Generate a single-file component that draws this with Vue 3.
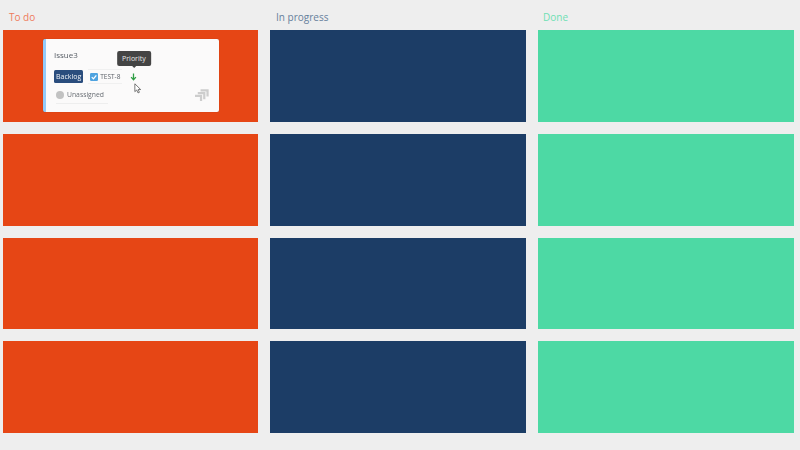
<template>
  <div class="board">
    <div v-for="col in columns" :key="col.name" class="column" :class="col.cls">
      <div class="title">{{ col.name }}</div>
      <div class="cells">
        <div v-for="n in 4" :key="n" class="cell">
          <div v-if="col.cls === 'todo' && n === 1" class="card">
            <div class="summary">Issue3</div>
            <div class="meta">
              <span class="status">Backlog</span>
              <span class="key">
                <svg class="check" viewBox="0 0 10 10" width="8" height="8">
                  <rect width="10" height="10" rx="1.5" fill="#4fa3e0" />
                  <path d="M2.2 5.2 4.3 7.3 7.9 2.9" fill="none" stroke="#fff" stroke-width="1.6" />
                </svg>
                TEST-8
              </span>
              <span class="priority">
                <svg viewBox="0 0 8 10" width="7" height="8">
                  <path d="M4 0.5V8.5M1 5.2 4 8.5 7 5.2" fill="none" stroke="#2f9e44" stroke-width="1.6" />
                </svg>
                <span class="tooltip">Priority</span>
                <svg class="cursor" viewBox="0 0 10 14" width="8" height="11">
                  <path d="M1 1V11L3.4 8.9 5 12.6 6.8 11.8 5.2 8.3H8.4Z" fill="#fff" stroke="#555" stroke-width="1" />
                </svg>
              </span>
            </div>
            <div class="bottom">
              <span class="assignee">
                <span class="avatar"></span>
                Unassigned
              </span>
              <svg class="logo" viewBox="0 0 16 14" width="15" height="13">
                <g fill="none" stroke="#cdcdcd" stroke-width="2.4">
                  <path d="M7 1.5H14.5V8" />
                  <path d="M4 4.5H11V11" />
                  <path d="M1 7.5H7.5V13" />
                </g>
              </svg>
            </div>
          </div>
        </div>
      </div>
    </div>
  </div>
</template>

<script setup>
const columns = [
  { name: 'To do', cls: 'todo' },
  { name: 'In progress', cls: 'progress' },
  { name: 'Done', cls: 'done' },
]
</script>

<style>
html, body {
  margin: 0;
  background: #eeeeee;
}
</style>

<style scoped>
.board {
  width: 800px;
  height: 450px;
  box-sizing: border-box;
  padding: 0 6px 0 3px;
  display: grid;
  grid-template-columns: 255px 256px 256px;
  gap: 12px;
  background: #eeeeee;
  font-family: "Open Sans", sans-serif;
  overflow: hidden;
}

.title {
  height: 30px;
  box-sizing: border-box;
  padding: 10px 0 0 6px;
  font-size: 10px;
  line-height: 15px;
}

.todo .title { color: #ee7b5c; }
.progress .title { color: #66809c; }
.done .title { color: #6fe0b4; padding-left: 5px; }

.cells {
  display: grid;
  grid-template-rows: 92px 92px 91px 92px;
  row-gap: 12px;
}

.cell {
  box-sizing: border-box;
  padding: 9px 39px 10px 40px;
}

.todo .cell { background: #e64615; }
.progress .cell { background: #1c3d66; }
.done .cell { background: #4dd9a4; }

.card {
  height: 100%;
  box-sizing: border-box;
  background: #fbfafa;
  border-left: 3px solid #93cbfa;
  border-radius: 2px;
  padding: 10px 8px 0 8px;
  color: #5a5f66;
  font-size: 6.8px;
  box-shadow: 0 0 1px rgba(0, 0, 0, 0.3);
  filter: blur(0.35px);
}

.summary {
  font-size: 8px;
  line-height: 12px;
  color: #555b63;
}

.meta {
  display: flex;
  align-items: center;
  margin-top: 8px;
}

.status {
  background: #2a4d7d;
  color: #f2f5f8;
  border-radius: 1.5px;
  padding: 0 2px;
  font-size: 7px;
  line-height: 13px;
}

.key {
  display: flex;
  align-items: center;
  gap: 2px;
  margin-left: 5px;
  padding: 1px 2px;
  line-height: 11px;
  border-top: 1px solid #f0f0f0;
  border-bottom: 1px solid #f0f0f0;
  font-size: 6.5px;
}

.priority {
  position: relative;
  display: flex;
  margin-left: 8px;
}

.tooltip {
  position: absolute;
  left: 50%;
  bottom: 15px;
  transform: translateX(-50%);
  background: #444444;
  color: #e8e8e8;
  font-size: 7px;
  line-height: 15px;
  padding: 0 5px;
  border-radius: 2px;
  white-space: nowrap;
}

.tooltip::after {
  content: "";
  position: absolute;
  left: 50%;
  bottom: -2px;
  margin-left: -2px;
  border-left: 2px solid transparent;
  border-right: 2px solid transparent;
  border-top: 2px solid #444444;
}

.cursor {
  position: absolute;
  left: 4px;
  top: 10px;
}

.bottom {
  display: flex;
  align-items: flex-start;
  justify-content: space-between;
  margin-top: 4px;
}

.assignee {
  display: flex;
  align-items: center;
  gap: 3px;
  margin-left: 2px;
  padding: 1px 4px 2px 0;
  line-height: 12px;
  border-bottom: 1px solid #eeeeee;
  color: #6a6f75;
}

.avatar {
  width: 8px;
  height: 8px;
  border-radius: 50%;
  background: #c2c2c2;
}

.logo {
  margin: 1px 2px 0 0;
}
</style>
